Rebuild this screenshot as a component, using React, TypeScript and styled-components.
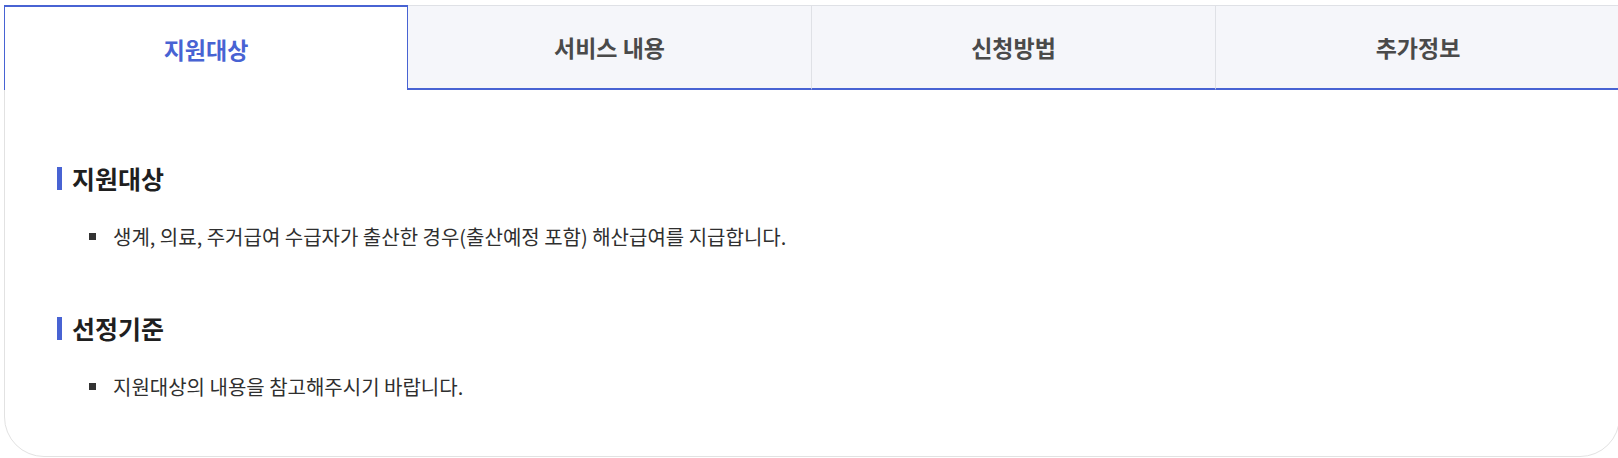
import styled, { createGlobalStyle } from "styled-components";
import { useState } from "react";

const GlobalStyle = createGlobalStyle`
  html, body {
    margin: 0;
    padding: 0;
    background: #ffffff;
    overflow: hidden;
  }
  body {
    font-family: "Noto Sans CJK KR", "Noto Sans", sans-serif;
    color: #333;
  }
  * {
    box-sizing: border-box;
  }
`;

const tabs = ["지원대상", "서비스 내용", "신청방법", "추가정보"];

const sections = [
  {
    title: "지원대상",
    items: ["생계, 의료, 주거급여 수급자가 출산한 경우(출산예정 포함) 해산급여를 지급합니다."],
  },
  {
    title: "선정기준",
    items: ["지원대상의 내용을 참고해주시기 바랍니다."],
  },
];

const App = () => {
  const [active, setActive] = useState(0);

  return (
    <Page>
      <GlobalStyle />
      <Container>
        <TabRow>
          {tabs.map((tab, i) => (
            <Tab key={tab} $active={i === active} onClick={() => setActive(i)}>
              {tab}
            </Tab>
          ))}
        </TabRow>
        <Content>
          {sections.map((section) => (
            <Section key={section.title}>
              <SectionTitle>{section.title}</SectionTitle>
              <List>
                {section.items.map((item) => (
                  <Item key={item}>{item}</Item>
                ))}
              </List>
            </Section>
          ))}
        </Content>
      </Container>
    </Page>
  );
};

const Page = styled.div`
  padding: 5px 0 0 4px;
`;

const Container = styled.div`
  width: calc(100% + 2px);
  border: 1px solid #e2e2e2;
  border-radius: 0 0 40px 40px;
  background: #fff;
`;

const TabRow = styled.div`
  display: grid;
  grid-template-columns: repeat(4, 1fr);
  margin: -1px -1px 0 -1px;
`;

const Tab = styled.button<{ $active: boolean }>`
  height: 85px;
  font-family: "Noto Sans CJK KR", "Noto Sans", sans-serif;
  font-size: 23px;
  font-weight: 700;
  cursor: pointer;
  background: ${(p) => (p.$active ? "#ffffff" : "#f5f6fa")};
  color: ${(p) => (p.$active ? "#4863d3" : "#4a4a4a")};
  border: none;
  border-top: ${(p) => (p.$active ? "2px solid #4863d3" : "1px solid #dfe1e6")};
  border-left: ${(p) => (p.$active ? "1px solid #4863d3" : "none")};
  border-right: ${(p) => (p.$active ? "1px solid #4863d3" : "1px solid #dfe1e6")};
  border-bottom: ${(p) => (p.$active ? "none" : "2px solid #4863d3")};
  padding: 0;

  &:last-child {
    border-right: none;
  }
`;

const Content = styled.div`
  padding: 72px 52px 56px;
`;

const Section = styled.section`
  & + & {
    margin-top: 62px;
  }
`;

const SectionTitle = styled.h3`
  display: flex;
  align-items: center;
  gap: 10px;
  margin: 0;
  height: 32px;
  font-size: 25px;
  font-weight: 700;
  color: #1f1f1f;

  &::before {
    content: "";
    width: 5px;
    height: 23px;
    background: #4863d3;
  }
`;

const List = styled.ul`
  list-style: none;
  margin: 28px 0 0;
  padding: 0 0 0 32px;
`;

const Item = styled.li`
  display: flex;
  align-items: center;
  gap: 17px;
  height: 28px;
  font-size: 20px;
  color: #2f2f2f;

  &::before {
    content: "";
    flex: 0 0 7px;
    height: 7px;
    background: #333;
  }
`;

export default App;
